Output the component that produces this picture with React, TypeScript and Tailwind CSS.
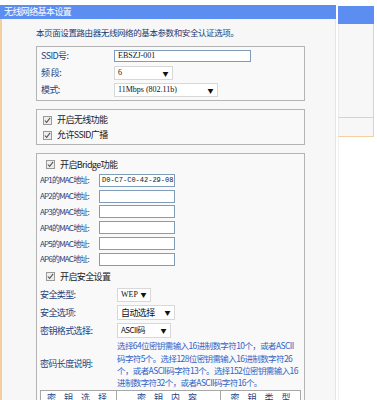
import React from "react";

const cn = `font-["Noto_Sans_CJK_SC","Noto_Sans",sans-serif]`;

const Check = () => (
  <span className="inline-flex h-[9px] w-[9px] items-center justify-center border border-[#9a9a9a] bg-[#eeeeee]">
    <svg viewBox="0 0 8 8" className="h-[7px] w-[7px]">
      <path d="M1 4 L3 6.2 L7 1" fill="none" stroke="#555" strokeWidth="1.2" />
    </svg>
  </span>
);

const CheckRow = ({ label, h = "h-[15px]" }: { label: string; h?: string }) => (
  <div className={`flex items-center ${h} pl-[6px] gap-[5px]`}>
    <Check />
    <span className="text-[#222]">{label}</span>
  </div>
);

const Select = ({ value, w }: { value: string; w: string }) => (
  <div className={`flex h-[14px] ${w} items-center justify-between border border-[#d8d8d8] bg-white pl-[3px] pr-[4px]`}>
    <span className="whitespace-nowrap text-[#111] text-[8px] tracking-normal font-['Liberation_Serif',serif]">{value}</span>
    <span className="text-[6px] text-[#111]">▼</span>
  </div>
);

const MacInput = ({ value }: { value?: string }) => (
  <div className="flex h-[13px] w-[76px] items-center overflow-hidden whitespace-nowrap border border-[#7f9db9] bg-white pl-[2px] text-[7px] tracking-normal text-[#111] font-['Liberation_Mono',monospace]">
    {value}
  </div>
);

const FormRow = ({ label, lw, children, h = "h-[17px]" }: { label: string; lw: string; children: React.ReactNode; h?: string }) => (
  <div className={`flex items-center ${h}`}>
    <span className={`${lw} shrink-0 text-[#24437e]`}>{label}</span>
    {children}
  </div>
);

export default function App() {
  return (
    <div className={`flex w-[377px] h-[400px] overflow-hidden bg-white pt-[5px] text-[9px] tracking-[-0.6px] ${cn}`}>
      <div className="flex w-[336px] shrink-0 flex-col">
        <div className="flex h-[16px] items-center bg-[#5b8ef0] pl-[4px] text-white">无线网络基本设置</div>
        <div className="flex flex-1 flex-col border-l-2 border-r border-l-[#f3cf9e] border-r-[#e4e4e4] bg-[#f7f7f7] pl-[34px] pr-[30px] pt-[6px]">
          <div className="h-[14px] whitespace-nowrap text-[8.5px] leading-[14px] tracking-[-0.4px] text-[#1e3a70]">本页面设置路由器无线网络的基本参数和安全认证选项。</div>
          <div className="mt-[7px] border border-[#b4b4b4] bg-[#f9f9f9] pl-[4px] py-[1px]">
            <FormRow label="SSID号:" lw="w-[73px]">
              <div className="flex h-[12px] w-[137px] items-center border border-[#7f9db9] bg-white pl-[3px] text-[8px] tracking-normal text-[#111] font-['Liberation_Serif',serif]">EBSZJ-001</div>
            </FormRow>
            <FormRow label="频 段:" lw="w-[73px]">
              <Select value="6" w="w-[59px]" />
            </FormRow>
            <FormRow label="模式:" lw="w-[73px]">
              <Select value="11Mbps (802.11b)" w="w-[104px]" />
            </FormRow>
          </div>
          <div className="mt-[8px] border border-[#b4b4b4] bg-[#f9f9f9] pt-[3px] pb-[1px]">
            <CheckRow label="开启无线功能" />
            <CheckRow label="允许SSID广播" />
          </div>
          <div className="mt-[8px] flex-1 border border-[#b4b4b4] bg-[#f9f9f9] pl-[3px] pr-[3px] pt-[3px]">
            <CheckRow label="开启Bridge功能" h="h-[16px]" />
            {["AP1的MAC地址:", "AP2的MAC地址:", "AP3的MAC地址:", "AP4的MAC地址:", "AP5的MAC地址:", "AP6的MAC地址:"].map((l, i) => (
              <div key={l} className="flex h-[15.8px] items-center">
                <span className="w-[59px] shrink-0 text-[8px] tracking-[-0.8px] text-[#24437e]">{l}</span>
                <MacInput value={i === 0 ? "D0-C7-C0-42-29-08" : undefined} />
              </div>
            ))}
            <CheckRow label="开启安全设置" h="h-[19px]" />
            <FormRow label="安全类型:" lw="w-[77px]" h="h-[17px]">
              <Select value="WEP" w="w-[34px]" />
            </FormRow>
            <FormRow label="安全选项:" lw="w-[77px]" h="h-[18px]">
              <div className="flex h-[15px] w-[58px] items-center justify-between border border-[#d8d8d8] bg-white pl-[3px] pr-[4px]">
                <span className="text-[#111]">自动选择</span>
                <span className="text-[6px] text-[#111]">▼</span>
              </div>
            </FormRow>
            <FormRow label="密钥格式选择:" lw="w-[77px]" h="h-[18px]">
              <div className="flex h-[15px] w-[54px] items-center justify-between border border-[#d8d8d8] bg-white pl-[3px] pr-[4px]">
                <span className="text-[#111] text-[8px]">ASCII码</span>
                <span className="text-[6px] text-[#111]">▼</span>
              </div>
            </FormRow>
            <div className="flex items-center">
              <span className="w-[77px] shrink-0 text-[#24437e]">密码长度说明:</span>
              <div className="whitespace-nowrap text-[8.5px] leading-[12.3px] text-[#3362c4]">
                选择64位密钥需输入16进制数字符10个，或者ASCII<br />
                码字符5个。选择128位密钥需输入16进制数字符26<br />
                个，或者ASCII码字符13个。选择152位密钥需输入16<br />
                进制数字符32个，或者ASCII码字符16个。
              </div>
            </div>
            <div className="mt-[2px] grid grid-cols-[76px_104px_82px] border border-[#a8a8a8] bg-white text-[#24437e]">
              <div className="border-r border-[#a8a8a8] text-center tracking-[3px]">密 钥 选 择</div>
              <div className="border-r border-[#a8a8a8] text-center tracking-[3px]">密 钥 内 容</div>
              <div className="text-center tracking-[3px]">密 钥 类 型</div>
            </div>
          </div>
        </div>
      </div>
      <div className="ml-[2px] flex w-[36px] shrink-0 flex-col pt-[1px]">
        <div className="h-[18px] bg-[#5b8ef0]" />
        <div className="h-[94px] border-l border-r border-b border-l-[#ececec] border-r-[#f3cf9e] border-b-[#f3cf9e] bg-[#f7f7f7]" />
        <div className="h-[19px] border-l border-r border-b border-l-[#ececec] border-r-[#f3cf9e] border-b-[#f3cf9e] bg-[#f7f7f7]" />
        <div className="flex-1 border-l border-[#f0f0f0] bg-white" />
      </div>
    </div>
  );
}
